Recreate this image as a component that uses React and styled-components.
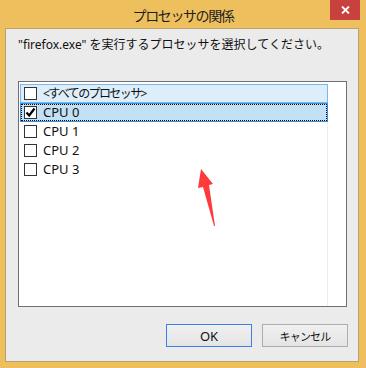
import React from "react";
import styled, { createGlobalStyle } from "styled-components";

const Global = createGlobalStyle`
  html, body { margin: 0; padding: 0; background: #edbf5c; }
  body { font-family: "Noto Sans", "Noto Sans CJK JP", sans-serif; }
`;

const Window = styled.div`
  width: 366px;
  height: 368px;
  box-sizing: border-box;
  background: #eebf5d;
  padding: 0 7px 6px 5px;
  display: flex;
  flex-direction: column;
`;

const TitleBar = styled.div`
  position: relative;
  height: 28px;
  display: flex;
  align-items: center;
  justify-content: center;
  margin: 0 -7px 0 -5px;
`;

const Title = styled.div`
  font-family: "Noto Sans CJK JP", sans-serif;
  font-size: 14px;
  letter-spacing: -1.4px;
  color: #1e1e1e;
  line-height: 1;
  margin-top: 1px;
`;

const CloseButton = styled.div`
  position: absolute;
  top: 0;
  right: 6px;
  width: 30px;
  height: 20px;
  background: #c7413f;
  display: flex;
  align-items: center;
  justify-content: center;
`;

const Client = styled.div`
  flex: 1;
  background: #ebebeb;
  border: 1px solid #b9a26d;
  display: flex;
  flex-direction: column;
  padding: 8px 10px 14px 12px;
`;

const Prompt = styled.div`
  font-size: 12px;
  line-height: 16px;
  color: #111;
  height: 16px;
  white-space: nowrap;
`;

const ListBox = styled.div`
  position: relative;
  margin-top: 28px;
  width: 329px;
  height: 226px;
  box-sizing: border-box;
  border: 1px solid #6d6e76;
  background: #fff;
  padding: 2px 0 0 1px;
`;

const Column = styled.div`
  width: 307px;
  height: 100%;
  border-right: 1px solid #e3effa;
  display: flex;
  flex-direction: column;
`;

const Row = styled.div`
  position: relative;
  height: 19px;
  box-sizing: border-box;
  margin-right: -1px;
  display: flex;
  align-items: center;
  padding-left: 3px;
  border: 1px solid
    ${(p) => (p.$state === "hot" ? "#7ab8e8" : p.$state === "selected" ? "#3393e2" : "transparent")};
  background: ${(p) => (p.$state === "hot" ? "#ddeefa" : p.$state === "selected" ? "#c3e0f5" : "transparent")};
`;

const Focus = styled.div`
  position: absolute;
  inset: 0;
  border: 1px dotted #000;
  pointer-events: none;
`;

const Box = styled.div`
  width: 13px;
  height: 13px;
  box-sizing: border-box;
  border: 1px solid #333;
  background: #fff;
  display: flex;
  align-items: center;
  justify-content: center;
  flex: none;
`;

const Label = styled.span`
  margin-left: 6px;
  font-size: ${(p) => (p.$jp ? "12px" : "13px")};
  letter-spacing: ${(p) => (p.$jp ? "-1.6px" : "0")};
  line-height: 1;
  color: #111;
  white-space: nowrap;
`;

const Arrow = styled.svg`
  position: absolute;
  left: 0;
  top: 0;
  pointer-events: none;
`;

const Buttons = styled.div`
  margin-top: auto;
  display: flex;
  justify-content: flex-end;
  gap: 10px;
`;

const Button = styled.div`
  width: 86px;
  height: 23px;
  box-sizing: border-box;
  border: 1px solid ${(p) => (p.$default ? "#3c7fe8" : "#adadad")};
  background: linear-gradient(#f0f0f0, #e4e4e4);
  display: flex;
  align-items: center;
  justify-content: center;
  font-size: ${(p) => (p.$jp ? "11px" : "13px")};
  letter-spacing: ${(p) => (p.$jp ? "-0.8px" : "0")};
  color: #111;
`;

const items = [
  { label: "<すべてのプロセッサ>", state: "hot", checked: false, jp: true },
  { label: "CPU 0", state: "selected", checked: true },
  { label: "CPU 1", state: "none", checked: false },
  { label: "CPU 2", state: "none", checked: false },
  { label: "CPU 3", state: "none", checked: false },
];

export default function App() {
  return (
    <>
      <Global />
      <Window>
        <TitleBar>
          <Title>プロセッサの関係</Title>
          <CloseButton>
            <svg width="9" height="8" viewBox="0 0 9 8">
              <path d="M1 0.5 L8 7.5 M8 0.5 L1 7.5" stroke="#fff" strokeWidth="1.8" />
            </svg>
          </CloseButton>
        </TitleBar>
        <Client>
          <Prompt>"firefox.exe" を実行するプロセッサを選択してください。</Prompt>
          <ListBox>
            <Column>
              {items.map((it) => (
                <Row key={it.label} $state={it.state}>
                  <Box>
                    {it.checked && (
                      <svg width="11" height="11" viewBox="0 0 11 11">
                        <path d="M1.5 5.5 L4.2 8.5 L9.5 1.5" fill="none" stroke="#000" strokeWidth="2.2" />
                      </svg>
                    )}
                  </Box>
                  <Label $jp={it.jp}>{it.label}</Label>
                  {it.state === "selected" && <Focus />}
                </Row>
              ))}
            </Column>
            <Arrow width="329" height="226" viewBox="0 0 329 226">
              <polygon
                points="182,87 194,102 190,103 196,144 195,144 184,105 179,106"
                fill="#fe3a3a"
              />
            </Arrow>
          </ListBox>
          <Buttons>
            <Button $default>OK</Button>
            <Button $jp>キャンセル</Button>
          </Buttons>
        </Client>
      </Window>
    </>
  );
}
